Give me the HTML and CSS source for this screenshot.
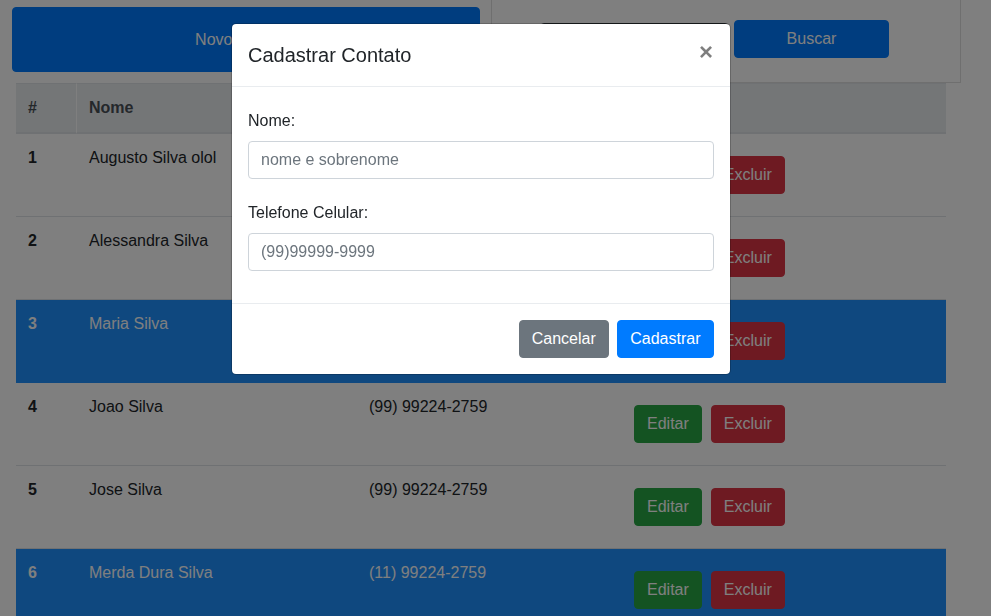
FILE: index.html
```html
<!DOCTYPE html>
<html lang="pt-BR">
<head>
<meta charset="utf-8">
<title>Contatos</title>
<link rel="stylesheet" href="styles.css">
</head>
<body>
<div class="page">
  <div class="top">
    <button class="btn btn-new" type="button">Novo Contato</button>
    <div class="search-card">
      <input class="search-input" type="text">
      <button class="btn btn-search" type="button">Buscar</button>
    </div>
  </div>
  <table class="contacts">
    <thead>
      <tr>
        <th class="c-id">#</th>
        <th class="c-name">Nome</th>
        <th class="c-phone">Telefone</th>
        <th class="c-act">Ações</th>
      </tr>
    </thead>
    <tbody>
      <tr>
        <td class="id">1</td><td>Augusto Silva olol</td><td>(99) 99224-2759</td>
        <td><div class="acts"><button class="btn btn-edit" type="button">Editar</button><button class="btn btn-del" type="button">Excluir</button></div></td>
      </tr>
      <tr>
        <td class="id">2</td><td>Alessandra Silva</td><td>(99) 99224-2759</td>
        <td><div class="acts"><button class="btn btn-edit" type="button">Editar</button><button class="btn btn-del" type="button">Excluir</button></div></td>
      </tr>
      <tr class="hl">
        <td class="id">3</td><td>Maria Silva</td><td>(11) 99224-2759</td>
        <td><div class="acts"><button class="btn btn-edit" type="button">Editar</button><button class="btn btn-del" type="button">Excluir</button></div></td>
      </tr>
      <tr>
        <td class="id">4</td><td>Joao Silva</td><td>(99) 99224-2759</td>
        <td><div class="acts"><button class="btn btn-edit" type="button">Editar</button><button class="btn btn-del" type="button">Excluir</button></div></td>
      </tr>
      <tr>
        <td class="id">5</td><td>Jose Silva</td><td>(99) 99224-2759</td>
        <td><div class="acts"><button class="btn btn-edit" type="button">Editar</button><button class="btn btn-del" type="button">Excluir</button></div></td>
      </tr>
      <tr class="hl">
        <td class="id">6</td><td>Merda Dura Silva</td><td>(11) 99224-2759</td>
        <td><div class="acts"><button class="btn btn-edit" type="button">Editar</button><button class="btn btn-del" type="button">Excluir</button></div></td>
      </tr>
    </tbody>
  </table>
</div>

<div class="backdrop"></div>

<div class="modal">
  <div class="modal-header">
    <h5 class="modal-title">Cadastrar Contato</h5>
    <button class="close" type="button">&times;</button>
  </div>
  <div class="modal-body">
    <div class="group">
      <label class="label">Nome:</label>
      <input class="form-control" type="text" placeholder="nome e sobrenome">
    </div>
    <div class="group">
      <label class="label">Telefone Celular:</label>
      <input class="form-control" type="text" placeholder="(99)99999-9999">
    </div>
  </div>
  <div class="modal-footer">
    <button class="btn btn-secondary" type="button">Cancelar</button>
    <button class="btn btn-primary" type="button">Cadastrar</button>
  </div>
</div>
</body>
</html>
```

FILE: styles.css
```css
* {
  box-sizing: border-box;
}

html,
body {
  margin: 0;
  height: 100%;
  overflow: hidden;
}

body {
  font-family: "Liberation Sans", Arial, sans-serif;
  font-size: 16px;
  line-height: 1.5;
  color: #212529;
  background: #fff;
}

.btn {
  font: inherit;
  line-height: 24px;
  padding: 6px 12px;
  border: 1px solid transparent;
  border-radius: 4px;
  color: #fff;
  cursor: pointer;
  white-space: nowrap;
}

/* top bar */
.top {
  display: flex;
  align-items: flex-start;
  gap: 11px;
  padding-left: 12px;
}

.btn-new {
  width: 468px;
  height: 65px;
  margin-top: 7px;
  padding-right: 16px;
  background: #007bff;
  border-color: #007bff;
}

.search-card {
  width: 470px;
  height: 83px;
  border: 1px solid rgba(0, 0, 0, 0.125);
  border-top: 0;
  display: flex;
  align-items: flex-start;
  padding: 20px 0 0 48px;
}

.search-input {
  width: 189px;
  height: 32px;
  margin-top: 3px;
  border: 1px solid #343a40;
  border-radius: 4px;
  font: inherit;
  background: #fff;
}

.btn-search {
  width: 155px;
  height: 38px;
  margin-left: 5px;
  background: #007bff;
  border-color: #007bff;
}

/* table */
.contacts {
  margin-left: 16px;
  width: 930px;
  table-layout: fixed;
  border-collapse: separate;
  border-spacing: 0;
}

.contacts th,
.contacts td {
  padding: 12px;
  text-align: left;
  vertical-align: top;
}

.contacts thead th {
  background: #e9ecef;
  color: #495057;
  font-weight: bold;
  border-top: 1px solid #dee2e6;
  border-bottom: 2px solid #dee2e6;
}

.c-id {
  width: 61px;
  border-right: 1px solid #fff;
}

.c-name {
  width: 280px;
}

.c-phone {
  width: 265px;
}

.c-act {
  width: 324px;
}

.contacts td {
  border-bottom: 1px solid #dee2e6;
}

.contacts td.id {
  font-weight: bold;
}

.contacts tr.hl td {
  background: #1e90ff;
  color: #fff;
  border-bottom-color: #1e90ff;
}

.acts {
  display: flex;
  gap: 9px;
  padding: 10px 0;
}

.btn-edit {
  background: #28a745;
  border-color: #28a745;
}

.btn-del {
  background: #dc3545;
  border-color: #dc3545;
}

/* modal */
.backdrop {
  position: fixed;
  inset: 0;
  background: rgba(0, 0, 0, 0.5);
}

.modal {
  position: fixed;
  left: 231px;
  top: 23px;
  width: 500px;
  background: #fff;
  background-clip: padding-box;
  border: 1px solid rgba(0, 0, 0, 0.2);
  border-radius: 5px;
}

.modal-header {
  display: flex;
  align-items: flex-start;
  justify-content: space-between;
  padding: 16px;
  border-bottom: 1px solid #e9ecef;
}

.modal-title {
  margin: 0;
  font-size: 20px;
  line-height: 30px;
  font-weight: 500;
}

.close {
  font-family: inherit;
  font-size: 24px;
  font-weight: bold;
  line-height: 1;
  color: #000;
  opacity: 0.5;
  background: none;
  border: 0;
  padding: 0;
  margin-right: 1px;
}

.modal-body {
  display: flex;
  flex-direction: column;
  gap: 22px;
  padding: 22px 16px 32px;
}

.label {
  display: block;
  margin-bottom: 8px;
}

.form-control {
  display: block;
  width: 100%;
  height: 38px;
  padding: 6px 12px;
  font: inherit;
  color: #495057;
  background: #fff;
  border: 1px solid #ced4da;
  border-radius: 4px;
}

.form-control::placeholder {
  color: #6c757d;
  opacity: 1;
}

.modal-footer {
  display: flex;
  justify-content: flex-end;
  gap: 8px;
  padding: 16px;
  border-top: 1px solid #e9ecef;
}

.btn-secondary {
  background: #6c757d;
  border-color: #6c757d;
}

.btn-primary {
  padding: 6px 12.5px;
  background: #007bff;
  border-color: #007bff;
}
```
